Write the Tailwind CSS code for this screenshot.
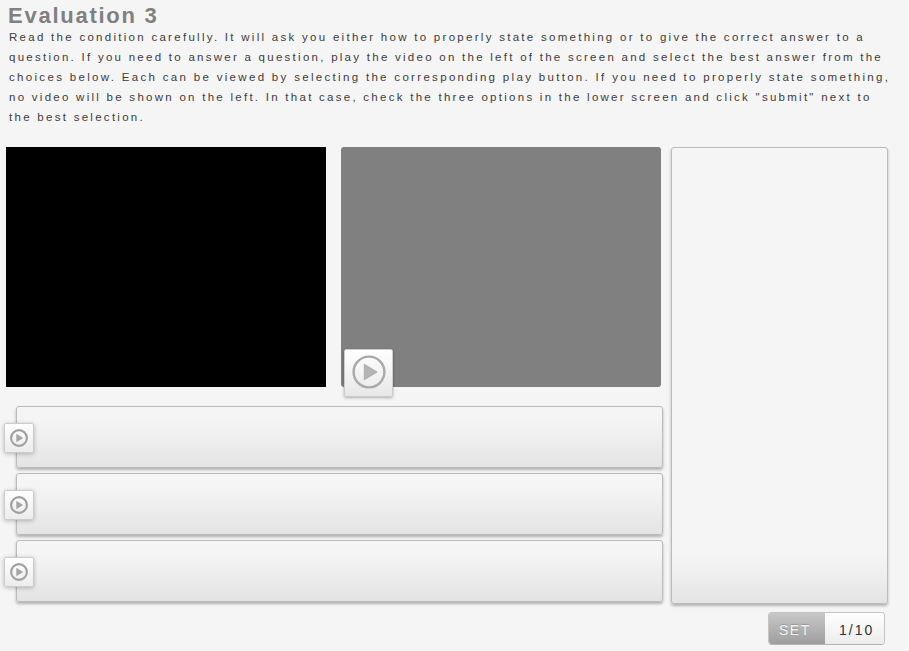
<!DOCTYPE html>
<html lang="en">
<head>
<meta charset="utf-8">
<title>Evaluation 3</title>
<script src="https://cdn.jsdelivr.net/npm/@tailwindcss/browser@4"></script>
</head>
<body class="bg-[#f5f5f5] font-['Liberation_Sans',Arial,sans-serif] w-[909px] h-[651px] overflow-hidden">
<svg class="hidden">
  <symbol id="play-lg" viewBox="0 0 34 34"><circle cx="17" cy="17" r="15.4" fill="none" stroke="#a9a9a9" stroke-width="2.4"/><path d="M12.3 9.2 25.2 17 12.3 24.8Z" fill="#b4b4b4" stroke="#a6a6a6" stroke-width=".8"/></symbol>
  <symbol id="play-sm" viewBox="0 0 18 18"><circle cx="9" cy="9" r="7.9" fill="none" stroke="#a0a0a0" stroke-width="2.1"/><path d="M6.3 4.8 13.2 9 6.3 13.2Z" fill="#a6a6a6"/></symbol>
</svg>
<header class="pl-[9px] pt-[3px] h-[147px]">
  <h1 class="text-[22px] leading-[25px] -mb-px font-bold tracking-[1.75px] text-[#808080] -ml-px">Evaluation 3</h1>
  <p class="text-[11.5px] leading-5 tracking-[2.28px] text-[#3c3c3c] whitespace-nowrap">Read the condition carefully. It will ask you either how to properly state something or to give the correct answer to a<br><span class="tracking-[2.265px]">question. If you need to answer a question, play the video on the left of the screen and select the best answer from the</span><br><span class="tracking-[2.316px]">choices below. Each can be viewed by selecting the corresponding play button. If you need to properly state something,</span><br><span class="tracking-[2.267px]">no video will be shown on the left. In that case, check the three options in the lower screen and click "submit" next to</span><br>the best selection.</p>
</header>
<main class="flex pl-[6px]">
  <div class="w-[665px]">
    <div class="flex gap-[15px] h-[259px]">
      <div class="w-[320px] h-[240px] bg-black"></div>
      <div class="relative w-[320px] h-[240px] bg-[#808080] rounded-[3px]">
        <button class="absolute left-[3px] top-[202px] w-[49px] h-[48px] rounded-[2px] border border-[#ccc] bg-linear-to-b from-white to-[#e8e8e8] shadow-[0_1px_3px_rgba(0,0,0,0.3)] flex items-center justify-center pb-[2px]"><svg class="w-[34px] h-[34px]"><use href="#play-lg"/></svg></button>
      </div>
    </div>
    <div class="flex flex-col gap-[5px] pl-[10px]">
      <div class="relative w-[647px] h-[62px] rounded-[3px] border border-[#bbb] bg-linear-to-b from-[#f5f5f5] from-20% to-[#e4e4e4] shadow-[0_2px_3px_rgba(0,0,0,0.28)]"><button class="absolute -left-[13px] top-[16px] w-[30px] h-[30px] rounded-[2px] border border-[#ccc] bg-linear-to-b from-white to-[#ececec] shadow-[0_1px_4px_rgba(0,0,0,0.25)] flex items-center justify-center pb-px pr-px"><svg class="w-[18px] h-[18px]"><use href="#play-sm"/></svg></button></div>
      <div class="relative w-[647px] h-[62px] rounded-[3px] border border-[#bbb] bg-linear-to-b from-[#f5f5f5] from-20% to-[#e4e4e4] shadow-[0_2px_3px_rgba(0,0,0,0.28)]"><button class="absolute -left-[13px] top-[16px] w-[30px] h-[30px] rounded-[2px] border border-[#ccc] bg-linear-to-b from-white to-[#ececec] shadow-[0_1px_4px_rgba(0,0,0,0.25)] flex items-center justify-center pb-px pr-px"><svg class="w-[18px] h-[18px]"><use href="#play-sm"/></svg></button></div>
      <div class="relative w-[647px] h-[62px] rounded-[3px] border border-[#bbb] bg-linear-to-b from-[#f5f5f5] from-20% to-[#e4e4e4] shadow-[0_2px_3px_rgba(0,0,0,0.28)]"><button class="absolute -left-[13px] top-[16px] w-[30px] h-[30px] rounded-[2px] border border-[#ccc] bg-linear-to-b from-white to-[#ececec] shadow-[0_1px_4px_rgba(0,0,0,0.25)] flex items-center justify-center pb-px pr-px"><svg class="w-[18px] h-[18px]"><use href="#play-sm"/></svg></button></div>
    </div>
  </div>
  <aside class="w-[217px]">
    <div class="h-[457px] rounded-[3px] border border-[#bbb] bg-linear-to-b from-[#f5f5f5] from-[408px] to-[#e4e4e4] shadow-[0_2px_3px_rgba(0,0,0,0.28)]"></div>
    <div class="mt-[8px] ml-[97px] w-[117px] h-[33px] flex rounded-[4px] border border-[#c4c4c4] border-b-[#b4b4b4] overflow-hidden text-[14px] leading-[34px] tracking-[2px]">
      <span class="w-[56px] pl-[10px] tracking-[1.5px] bg-linear-to-b from-[#c8c8c8] to-[#9e9e9e] text-[#f5f5f5] [text-shadow:0_-1px_1px_rgba(0,0,0,0.2)]">SET</span>
      <span class="flex-1 pl-[14px] bg-linear-to-b from-white to-[#ececec] text-[#333]">1/10</span>
    </div>
  </aside>
</main>
</body>
</html>
